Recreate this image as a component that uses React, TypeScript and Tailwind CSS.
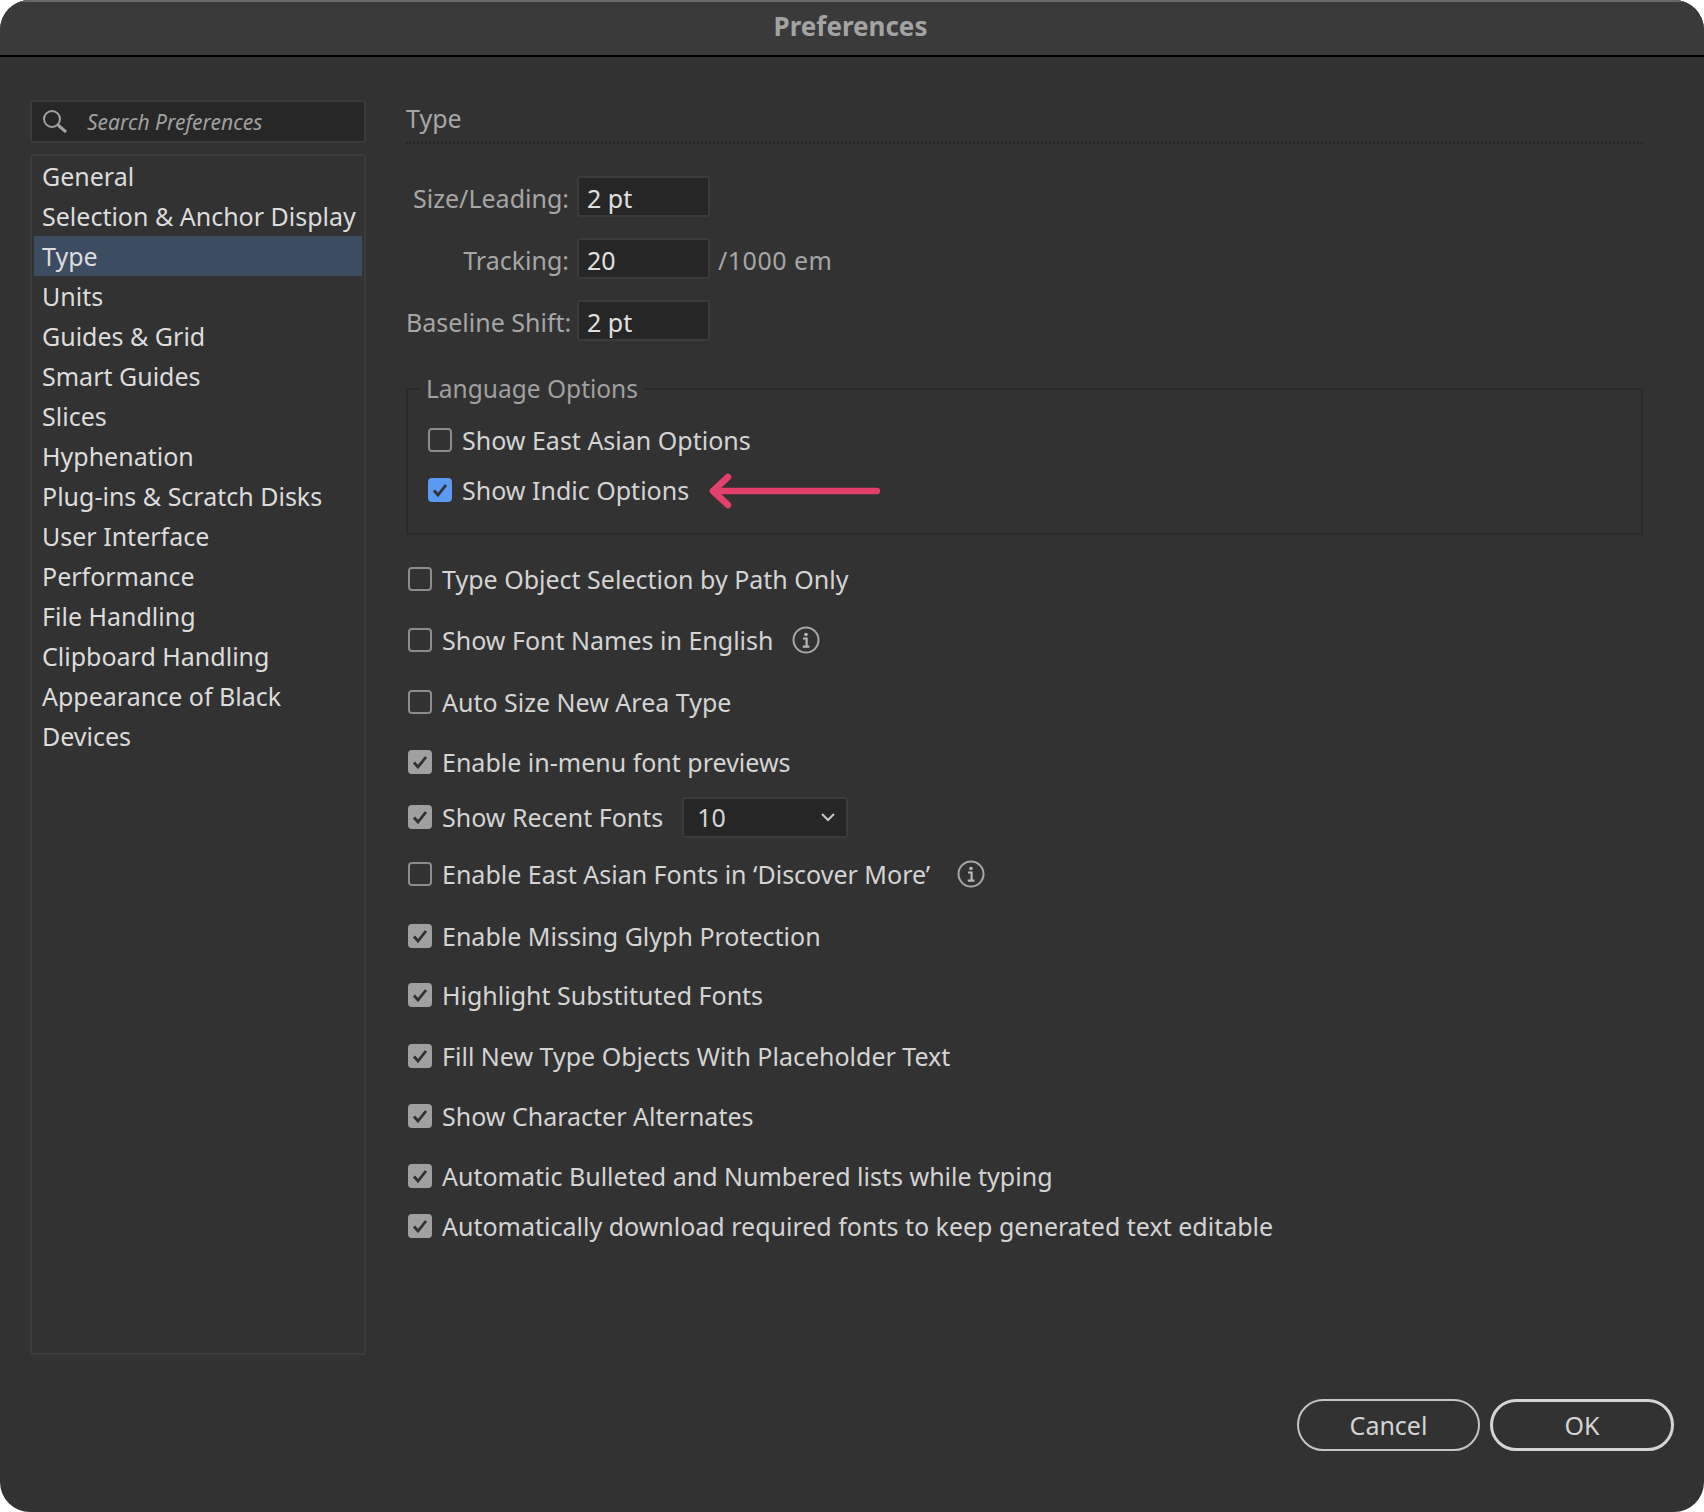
const categories = [
  "General",
  "Selection & Anchor Display",
  "Type",
  "Units",
  "Guides & Grid",
  "Smart Guides",
  "Slices",
  "Hyphenation",
  "Plug-ins & Scratch Disks",
  "User Interface",
  "Performance",
  "File Handling",
  "Clipboard Handling",
  "Appearance of Black",
  "Devices",
];

function InfoIcon() {
  return (
    <svg width="28" height="28" viewBox="0 0 28 28" fill="none" className="shrink-0">
      <circle cx="14" cy="14" r="12.5" stroke="#a8a8a8" strokeWidth="2" />
      <circle cx="14" cy="8.5" r="1.8" fill="#b8b8b8" />
      <path d="M11 12.5h3.6V20M10.8 20.6h6.6" stroke="#b8b8b8" strokeWidth="2.2" />
    </svg>
  );
}

function Checkbox({ checked, blue }: { checked?: boolean; blue?: boolean }) {
  if (!checked) {
    return <span className="w-[24px] h-[24px] shrink-0 rounded-[4px] border-2 border-[#8c8c8c]" />;
  }
  return (
    <span
      className={`w-[24px] h-[24px] shrink-0 rounded-[4px] flex items-center justify-center ${
        blue ? "bg-[#5a9af0]" : "bg-[#a0a0a0]"
      }`}
    >
      <svg width="16" height="14" viewBox="0 0 16 14" fill="none">
        <path d="M2 7.5l4 4.5L14 2" stroke="#303030" strokeWidth="2.8" />
      </svg>
    </span>
  );
}

function CheckRow({
  label,
  checked,
  blue,
  className = "",
  children,
}: {
  label: string;
  checked?: boolean;
  blue?: boolean;
  className?: string;
  children?: React.ReactNode;
}) {
  return (
    <div className={`flex items-center h-[30px] ${className}`}>
      <Checkbox checked={checked} blue={blue} />
      <span className="ml-[10px] text-[#d4d4d4] whitespace-nowrap">{label}</span>
      {children}
    </div>
  );
}

function NumberField({ label, value, suffix, className = "" }: { label: string; value: string; suffix?: string; className?: string }) {
  return (
    <div className={`flex items-center h-[41px] ${className}`}>
      <span className="w-[163px] pt-[3px] text-right text-[#a6a6a6] whitespace-nowrap">{label}</span>
      <div className="ml-[8px] w-[133px] h-[41px] pl-[8px] pt-[2px] flex items-center rounded-[3px] bg-[#262626] border-2 border-[#3b3b3b] text-[#e0e0e0]">
        {value}
      </div>
      {suffix && <span className="ml-[8px] pt-[3px] tracking-[0.5px] text-[#a6a6a6] whitespace-nowrap">{suffix}</span>}
    </div>
  );
}

export default function App() {
  return (
    <div className="w-[1704px] h-[1512px] bg-white overflow-hidden font-['Noto_Sans',sans-serif] text-[25px] leading-[30px]">
      <div className="w-full h-full rounded-[30px] bg-[#323232] flex flex-col overflow-hidden">
        <div className="h-[57px] shrink-0 pb-[6px] pr-[3px] bg-[#3a3a3a] border-t-2 border-[#6a6a6a] border-b-2 border-b-black flex items-center justify-center">
          <span className="font-bold text-[#a3a3a3] text-[26px]">Preferences</span>
        </div>

        <div className="flex-1 flex pl-[30px] pr-[61px] pt-[43px]">
          <div className="w-[336px] shrink-0">
            <div className="h-[43px] flex items-center rounded-[3px] bg-[#272727] border-2 border-[#3b3b3b] pl-[10px]">
              <svg width="26" height="26" viewBox="0 0 26 26" fill="none" className="shrink-0">
                <circle cx="10" cy="10" r="8" stroke="#a0a0a0" strokeWidth="2" />
                <path d="M16 16l8 7" stroke="#a0a0a0" strokeWidth="3" />
              </svg>
              <span className="ml-[19px] italic text-[#a0a0a0] text-[21px]">Search Preferences</span>
            </div>
            <div className="mt-[11px] h-[1201px] rounded-[3px] border-2 border-[#3b3b3b] px-[2px]">
              {categories.map((name) => (
                <div
                  key={name}
                  className={`h-[40px] pl-[8px] flex items-center whitespace-nowrap text-[#dcdcdc] ${
                    name === "Type" ? "bg-[#3c4c61]" : ""
                  }`}
                >
                  {name}
                </div>
              ))}
            </div>
          </div>

          <div className="flex-1 ml-[40px]">
            <div className="h-[44px] pt-[3px] border-b-2 border-dotted border-[#262626] text-[#a6a6a6]">Type</div>

            <NumberField className="mt-[32px]" label="Size/Leading:" value="2 pt" />
            <NumberField className="mt-[21px]" label="Tracking:" value="20" suffix="/1000 em" />
            <NumberField className="mt-[21px]" label="Baseline Shift:" value="2 pt" />

            <fieldset className="mt-[33px] h-[161px] rounded-[3px] border-2 border-[#2a2a2a] pl-[20px]">
              <legend className="ml-[-9px] px-[7px] text-[24.5px] text-[#a0a0a0] whitespace-nowrap">Language Options</legend>
              <CheckRow className="mt-[21px]" label="Show East Asian Options" />
              <div className="flex items-center mt-[16px]">
                <CheckRow label="Show Indic Options" checked blue />
                <svg width="172" height="36" viewBox="0 0 172 36" fill="none" className="ml-[19px] mt-[2px] shrink-0">
                  <path d="M169 18H5M20 4L5 18l15 14" stroke="#e4406c" strokeWidth="6.5" strokeLinecap="round" strokeLinejoin="round" />
                </svg>
              </div>
            </fieldset>

            <div className="pl-[2px]">
              <CheckRow className="mt-[29px]" label="Type Object Selection by Path Only" />
              <CheckRow className="mt-[31px]" label="Show Font Names in English">
                <span className="ml-[19px]"><InfoIcon /></span>
              </CheckRow>
              <CheckRow className="mt-[32px]" label="Auto Size New Area Type" />
              <CheckRow className="mt-[30px]" label="Enable in-menu font previews" checked />
              <CheckRow className="mt-[25px]" label="Show Recent Fonts" checked>
                <div className="ml-[19px] w-[166px] h-[41px] pl-[13px] pr-[10px] flex items-center justify-between rounded-[3px] bg-[#262626] border-2 border-[#3b3b3b] text-[#d4d4d4]">
                  10
                  <svg width="16" height="10" viewBox="0 0 16 10" fill="none">
                    <path d="M2 2l6 6 6-6" stroke="#c8c8c8" strokeWidth="2" />
                  </svg>
                </div>
              </CheckRow>
              <CheckRow className="mt-[27px]" label="Enable East Asian Fonts in ‘Discover More’">
                <span className="ml-[27px]"><InfoIcon /></span>
              </CheckRow>
              <CheckRow className="mt-[32px]" label="Enable Missing Glyph Protection" checked />
              <CheckRow className="mt-[29px]" label="Highlight Substituted Fonts" checked />
              <CheckRow className="mt-[31px]" label="Fill New Type Objects With Placeholder Text" checked />
              <CheckRow className="mt-[30px]" label="Show Character Alternates" checked />
              <CheckRow className="mt-[30px]" label="Automatic Bulleted and Numbered lists while typing" checked />
              <CheckRow className="mt-[20px]" label="Automatically download required fonts to keep generated text editable" checked />
            </div>
          </div>
        </div>

        <div className="flex justify-end gap-[10px] pr-[30px] pb-[61px]">
          <button className="w-[183px] h-[52px] rounded-[26px] border-2 border-[#c4c4c4] text-[#d4d4d4]">Cancel</button>
          <button className="w-[184px] h-[52px] rounded-[26px] border-[3px] border-[#d4d4d4] text-[#d4d4d4]">OK</button>
        </div>
      </div>
    </div>
  );
}
